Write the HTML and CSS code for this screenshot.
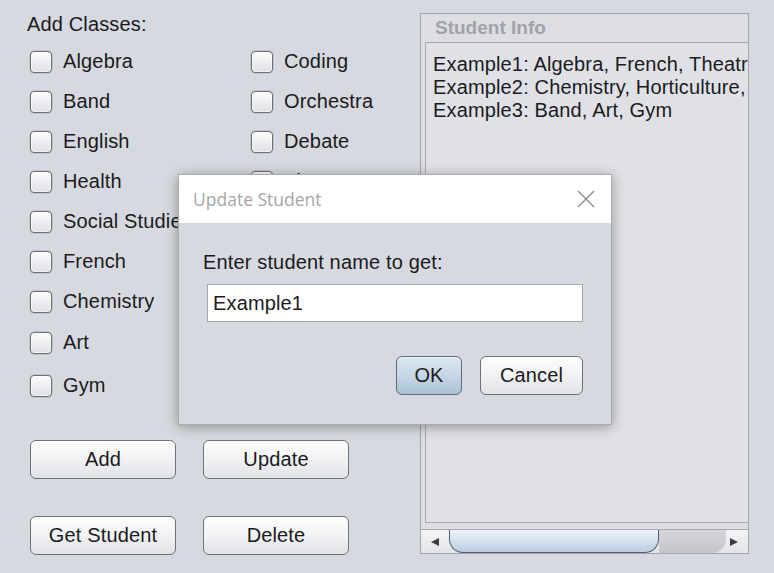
FILE: index.html
```html
<!DOCTYPE html>
<html>
<head>
<meta charset="utf-8">
<title>Student Classes</title>
<link rel="stylesheet" href="styles.css">
</head>
<body>
<div class="window">
  <div class="left">
    <div class="heading">Add Classes:</div>
    <div class="classes">
      <label class="check"><span class="box"></span>Algebra</label>
      <label class="check"><span class="box"></span>Band</label>
      <label class="check"><span class="box"></span>English</label>
      <label class="check"><span class="box"></span>Health</label>
      <label class="check"><span class="box"></span>Social Studies</label>
      <label class="check"><span class="box"></span>French</label>
      <label class="check"><span class="box"></span>Chemistry</label>
      <label class="check"><span class="box"></span>Art</label>
      <label class="check"><span class="box"></span>Gym</label>
      <label class="check"><span class="box"></span>Coding</label>
      <label class="check"><span class="box"></span>Orchestra</label>
      <label class="check"><span class="box"></span>Debate</label>
      <label class="check"><span class="box"></span>Theatre</label>
      <label class="check"><span class="box"></span>Horticulture</label>
    </div>
    <div class="actions">
      <button class="btn">Add</button>
      <button class="btn">Update</button>
      <button class="btn">Get Student</button>
      <button class="btn">Delete</button>
    </div>
  </div>
  <div class="info">
    <div class="info-title">Student Info</div>
    <div class="info-text">
      <div class="line">Example1: Algebra, French, Theatre</div>
      <div class="line">Example2: Chemistry, Horticulture,</div>
      <div class="line">Example3: Band, Art, Gym</div>
    </div>
    <div class="hscroll">
      <div class="arrow">
        <svg width="10" height="10" viewBox="0 0 10 10"><polygon points="1,5 9,1 9,9" fill="#3a3d42"/></svg>
      </div>
      <div class="track">
        <div class="thumb"></div>
        <div class="rest"></div>
      </div>
      <div class="arrow">
        <svg width="10" height="10" viewBox="0 0 10 10"><polygon points="9,5 1,1 1,9" fill="#3a3d42"/></svg>
      </div>
    </div>
  </div>
</div>

<div class="dialog">
  <div class="dialog-title">
    <span>Update Student</span>
    <svg class="close" width="20" height="20" viewBox="0 0 20 20"><path d="M2 2 L18 18 M18 2 L2 18" stroke="#8a8a8a" stroke-width="1.3" fill="none"/></svg>
  </div>
  <div class="dialog-body">
    <div class="prompt">Enter student name to get:</div>
    <div class="field">Example1</div>
    <div class="dialog-buttons">
      <button class="btn ok">OK</button>
      <button class="btn cancel">Cancel</button>
    </div>
  </div>
</div>
</body>
</html>
```

FILE: styles.css
```css
* { box-sizing: border-box; }

html, body {
  margin: 0;
  padding: 0;
}

body {
  width: 774px;
  height: 573px;
  overflow: hidden;
  background: #d6d9df;
  font-family: "Liberation Sans", Arial, sans-serif;
  font-size: 20px;
  letter-spacing: 0.15px;
  color: #1b1b1d;
  position: relative;
}

.window {
  display: flex;
  padding: 13px 0 19px 0;
  height: 573px;
}

.left {
  width: 420px;
  padding-left: 27px;
}

.heading {
  line-height: 23px;
  height: 23px;
  margin-bottom: 5px;
}

.classes {
  display: grid;
  grid-auto-flow: column;
  grid-template-columns: 221px 150px;
  grid-template-rows: repeat(7, 40px) 42px 44px;
  padding-left: 3px;
}

.check {
  display: flex;
  align-items: center;
  gap: 11px;
  white-space: nowrap;
  line-height: 23px;
  padding-top: 1px;
}

.box {
  width: 22px;
  height: 22px;
  flex: none;
  border: 1px solid #6c6f74;
  border-radius: 4px;
  background: linear-gradient(#fbfbfc, #dfe1e5);
  box-shadow: inset 0 0 0 1px rgba(255,255,255,0.6), 0 0 0 0.5px rgba(90,92,96,0.35);
}

.actions {
  display: grid;
  grid-template-columns: 146px 146px;
  grid-auto-rows: 39px;
  column-gap: 27px;
  row-gap: 37px;
  margin-top: 33px;
  padding-left: 3px;
}

.btn {
  font-family: "Liberation Sans", Arial, sans-serif;
  font-size: 20px;
  letter-spacing: 0.15px;
  color: #1b1b1d;
  border: 1px solid #6e7176;
  border-radius: 6px;
  background: linear-gradient(#fdfdfe 0%, #f1f2f4 50%, #e0e2e6 100%);
  box-shadow: inset 0 1px 0 #ffffff;
  padding: 0;
  margin: 0;
  height: 39px;
}

.info {
  width: 329px;
  border: 1px solid #a2a5aa;
  background: #dcdee3;
  display: flex;
  flex-direction: column;
}

.info-title {
  height: 28px;
  line-height: 28px;
  padding-left: 14px;
  font-weight: bold;
  font-size: 19px;
  color: #a0a3a8;
  letter-spacing: 0;
}

.info-text {
  flex: 1;
  margin-left: 4px;
  border: 1px solid #a6a9ae;
  border-right: none;
  background: #dfe1e6;
  padding: 10px 0 0 7px;
  overflow: hidden;
  white-space: nowrap;
}

.line {
  line-height: 23px;
}

.hscroll {
  margin-top: 6px;
  height: 24px;
  display: flex;
  border-top: 1px solid #a6a9ae;
  background: linear-gradient(#f3f4f5, #e2e4e7);
}

.arrow {
  width: 28px;
  flex: none;
  display: flex;
  align-items: center;
  justify-content: center;
}

.track {
  flex: 1;
  display: flex;
}

.thumb {
  width: 210px;
  height: 23px;
  border: 1px solid #4f5f70;
  border-top: none;
  border-radius: 0 0 14px 14px;
  background: linear-gradient(#eef3f8 0%, #d6e3ee 45%, #b8cddf 100%);
}

.rest {
  flex: 1;
  height: 23px;
  border-radius: 0 0 14px 0;
  background: linear-gradient(#d4d6d9, #c3c5c9);
  margin-right: -6px;
}

.dialog {
  position: absolute;
  left: 178px;
  top: 174px;
  width: 434px;
  height: 251px;
  background: #d6d9df;
  border: 1px solid #a9abaf;
  box-shadow: 0 2px 12px rgba(0,0,0,0.35);
  display: flex;
  flex-direction: column;
}

.dialog-title {
  height: 48px;
  background: #ffffff;
  display: flex;
  align-items: center;
  justify-content: space-between;
  padding: 0 15px 0 14px;
  font-family: "Open Sans", "Noto Sans", sans-serif;
  font-size: 17.5px;
  letter-spacing: 0;
  color: #a6a6a6;
}

.dialog-body {
  flex: 1;
  padding: 28px 28px 0 24px;
}

.prompt {
  line-height: 23px;
  height: 23px;
}

.field {
  margin: 10px 0 0 4px;
  height: 38px;
  background: #ffffff;
  border: 1px solid #a3a6ab;
  padding-left: 5px;
  line-height: 36px;
}

.dialog-buttons {
  display: flex;
  justify-content: flex-end;
  gap: 18px;
  margin-top: 34px;
}

.ok {
  width: 66px;
  border-color: #5b6b7b;
  background: linear-gradient(#dbe6f0 0%, #c6d6e4 50%, #acc1d5 100%);
  box-shadow: inset 0 1px 0 #eef3f8;
}

.cancel {
  width: 103px;
}
```
